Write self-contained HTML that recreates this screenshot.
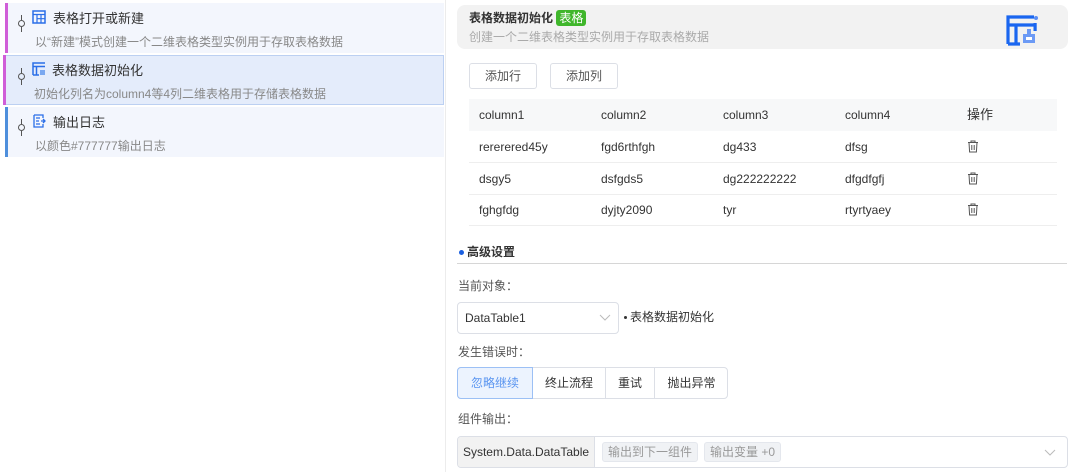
<!DOCTYPE html>
<html><head><meta charset="utf-8"><style>
*{box-sizing:border-box;margin:0;padding:0}
body{width:1071px;height:472px;background:#fff;font-family:"Liberation Sans","Noto Sans CJK SC",sans-serif;font-size:12px;line-height:16px;color:#333;position:relative;overflow:hidden}
.a{position:absolute}
.card{position:absolute;left:5px;width:439px;height:50px;background:#f3f6fd}
.card .bar{position:absolute;left:0;top:0;bottom:0;width:3px}
.card .t{position:absolute;left:48px;top:8px;font-size:13px;color:#333}
.card .d{position:absolute;left:30px;top:31px;font-size:12px;color:#888}
.card .pin{position:absolute;left:13px;top:17px;width:7px;height:7px;border:1.3px solid #555;border-radius:50%}
.card .pin:before{content:"";position:absolute;left:2px;top:-6px;width:1.3px;height:5px;background:#555}
.card .pin:after{content:"";position:absolute;left:2px;top:6px;width:1.3px;height:5px;background:#555}
.card svg{position:absolute;left:27px;top:7px}
.btn{position:absolute;height:26px;border:1px solid #dcdfe6;border-radius:3px;font-size:12px;line-height:24px;text-align:center;color:#555}
.th,.td{position:absolute;font-size:12px;color:#333}
.tag{display:inline-block;background:#f0f2f5;border:1px solid #e4e7ed;color:#999;border-radius:3px;padding:0 5px;height:20px;line-height:18px;margin-right:6px}
</style></head><body>
<div class="a" style="left:445px;top:0;width:1px;height:472px;background:#ececec"></div>

<div class="card" style="top:3px"><div class="bar" style="background:#d05ed8"></div><div class="pin"></div>
<svg width="14" height="14" viewBox="0 0 14 14"><rect x="1" y="1" width="12" height="12" fill="none" stroke="#2a6ee8" stroke-width="1.5"/><path d="M1 4.5H13M5 4.5V13M5 8.7H13M9 4.5V13" stroke="#2a6ee8" stroke-width="1.2"/></svg>
<div class="t">表格打开或新建</div><div class="d">以“新建”模式创建一个二维表格类型实例用于存取表格数据</div></div>

<div class="card" style="top:55px;left:3px;width:441px;background:#e4ecfb;border:1px solid #bcd0f2"><div class="bar" style="background:#d05ed8;left:-1px;top:-1px;bottom:-1px"></div><div class="pin" style="left:14px"></div>
<svg width="14" height="14" viewBox="0 0 14 14" style="left:28px;top:6px"><path d="M1 13V1H13M1 4.5H13M4.5 4.5V13M1 13H7" fill="none" stroke="#2a6ee8" stroke-width="1.5"/><rect x="8" y="8" width="5" height="5" fill="#7aa8f0"/></svg>
<div class="t" style="left:48px;top:7px">表格数据初始化</div><div class="d" style="top:30px">初始化列名为column4等4列二维表格用于存储表格数据</div></div>

<div class="card" style="top:107px"><div class="bar" style="background:#4e8fdc"></div><div class="pin"></div>
<svg width="14" height="14" viewBox="0 0 14 14"><path d="M2 1H11V4M2 1V13H11V10M4 4H8M4 7H7M4 10H8M9 7H13M11 5L13 7L11 9" fill="none" stroke="#2a6ee8" stroke-width="1.3"/></svg>
<div class="t">输出日志</div><div class="d">以颜色#777777输出日志</div></div>

<div class="a" style="left:457px;top:5px;width:611px;height:44px;background:#f2f2f2;border-radius:8px"></div>
<div class="a" style="left:469px;top:10px;font-size:12px;font-weight:bold;color:#333">表格数据初始化 <span style="background:#3fb62b;color:#fff;font-weight:normal;border-radius:3px;padding:1px 3px">表格</span></div>
<div class="a" style="left:469px;top:29px;color:#aaa">创建一个二维表格类型实例用于存取表格数据</div>
<svg class="a" style="left:1005px;top:14px" width="36" height="32" viewBox="0 0 36 32"><path d="M3 30V3H29M3 11H29M11 11V30M3 30H15" fill="none" stroke="#1a66f0" stroke-width="3.2"/><circle cx="31" cy="4" r="2" fill="#5a8ef5"/><rect x="28.5" y="9" width="3.2" height="8" fill="#1a66f0"/><path d="M18 29V20H22V15H26V20H30V29Z" fill="#6c9af5"/><rect x="21" y="23" width="6" height="3" fill="#fff"/></svg>

<div class="btn" style="left:469px;top:63px;width:68px">添加行</div>
<div class="btn" style="left:550px;top:63px;width:68px">添加列</div>

<div class="a" style="left:469px;top:99px;width:588px;height:32px;background:#f7f8f9"></div>
<div class="th" style="left:479px;top:107px">column1</div><div class="th" style="left:601px;top:107px">column2</div><div class="th" style="left:723px;top:107px">column3</div><div class="th" style="left:845px;top:107px">column4</div><div class="th" style="left:967px;top:107px;font-size:13px">操作</div>
<div class="a" style="left:469px;top:162px;width:588px;height:1px;background:#eee"></div>
<div class="a" style="left:469px;top:194px;width:588px;height:1px;background:#eee"></div>
<div class="a" style="left:469px;top:225px;width:588px;height:1px;background:#eee"></div>

<div class="td" style="left:479px;top:139px">rererered45y</div><div class="td" style="left:601px;top:139px">fgd6rthfgh</div><div class="td" style="left:723px;top:139px">dg433</div><div class="td" style="left:845px;top:139px">dfsg</div>
<div class="td" style="left:479px;top:171px">dsgy5</div><div class="td" style="left:601px;top:171px">dsfgds5</div><div class="td" style="left:723px;top:171px">dg222222222</div><div class="td" style="left:845px;top:171px">dfgdfgfj</div>
<div class="td" style="left:479px;top:202px">fghgfdg</div><div class="td" style="left:601px;top:202px">dyjty2090</div><div class="td" style="left:723px;top:202px">tyr</div><div class="td" style="left:845px;top:202px">rtyrtyaey</div>
<svg class="a" style="left:967px;top:140px" width="12" height="13" viewBox="0 0 12 13"><path d="M1 2.5H11M4 2.5V1H8V2.5M2 2.5L2.6 12H9.4L10 2.5M4.8 5V10M7.2 5V10" fill="none" stroke="#555" stroke-width="1"/></svg>
<svg class="a" style="left:967px;top:172px" width="12" height="13" viewBox="0 0 12 13"><path d="M1 2.5H11M4 2.5V1H8V2.5M2 2.5L2.6 12H9.4L10 2.5M4.8 5V10M7.2 5V10" fill="none" stroke="#555" stroke-width="1"/></svg>
<svg class="a" style="left:967px;top:203px" width="12" height="13" viewBox="0 0 12 13"><path d="M1 2.5H11M4 2.5V1H8V2.5M2 2.5L2.6 12H9.4L10 2.5M4.8 5V10M7.2 5V10" fill="none" stroke="#555" stroke-width="1"/></svg>

<div class="a" style="left:459px;top:250px;width:5px;height:5px;border-radius:50%;background:#1a5fe0"></div>
<div class="a" style="left:467px;top:244px;font-weight:bold;color:#333">高级设置</div>
<div class="a" style="left:457px;top:263px;width:610px;height:1px;background:#d6d6d6"></div>

<div class="a" style="left:458px;top:278px;color:#555">当前对象：</div>
<div class="a" style="left:457px;top:302px;width:162px;height:32px;border:1px solid #dcdfe6;border-radius:4px"></div>
<div class="a" style="left:465px;top:310px;color:#333">DataTable1</div>
<svg class="a" style="left:599px;top:314px" width="12" height="7" viewBox="0 0 12 7"><path d="M1 1L6 6L11 1" fill="none" stroke="#bbb" stroke-width="1"/></svg>
<div class="a" style="left:624px;top:316px;width:3px;height:3px;border-radius:50%;background:#333"></div>
<div class="a" style="left:630px;top:309px;color:#333">表格数据初始化</div>

<div class="a" style="left:458px;top:344px;color:#555">发生错误时：</div>
<div class="a" style="left:457px;top:367px;width:271px;height:32px;border:1px solid #dcdfe6;border-radius:4px"></div>
<div class="a" style="left:457px;top:367px;width:76px;height:32px;border:1px solid #9cc0f5;background:#ecf3fe;border-radius:4px 0 0 4px;color:#5a95f0;text-align:center;line-height:30px">忽略继续</div>
<div class="a" style="left:533px;top:368px;width:73px;height:30px;border-right:1px solid #dcdfe6;text-align:center;line-height:30px;color:#333">终止流程</div>
<div class="a" style="left:606px;top:368px;width:49px;height:30px;border-right:1px solid #dcdfe6;text-align:center;line-height:30px;color:#333">重试</div>
<div class="a" style="left:655px;top:368px;width:73px;height:30px;text-align:center;line-height:30px;color:#333">抛出异常</div>

<div class="a" style="left:458px;top:411px;color:#555">组件输出：</div>
<div class="a" style="left:457px;top:436px;width:611px;height:32px;border:1px solid #dcdfe6;border-radius:4px;overflow:hidden">
<div class="a" style="left:0;top:0;width:137px;height:30px;background:#f2f2f2;border-right:1px solid #dcdfe6;text-align:center;line-height:30px;color:#333">System.Data.DataTable</div>
<div class="a" style="left:144px;top:5px"><span class="tag">输出到下一组件</span><span class="tag">输出变量 +0</span></div>
<svg class="a" style="left:586px;top:12px" width="12" height="7" viewBox="0 0 12 7"><path d="M1 1L6 6L11 1" fill="none" stroke="#bbb" stroke-width="1"/></svg>
</div>
</body></html>
